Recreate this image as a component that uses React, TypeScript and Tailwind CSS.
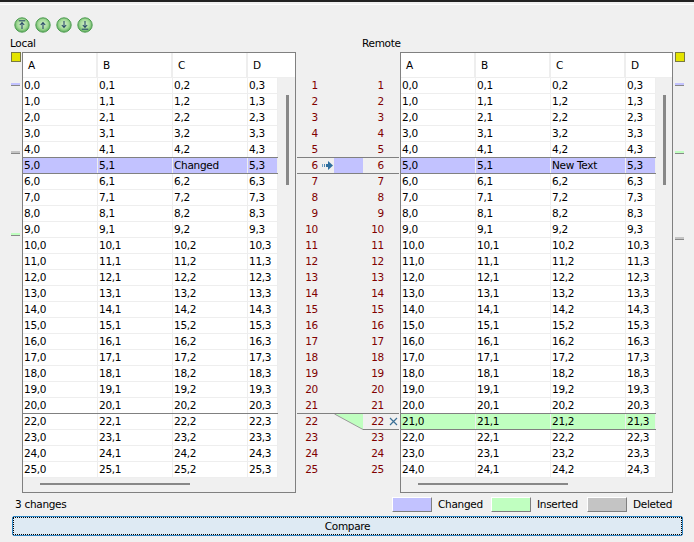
const ROWS_LOCAL = [...Array.from({ length: 21 }, (_, i) => i), 22, 23, 24, 25];
const ROWS_REMOTE = Array.from({ length: 25 }, (_, i) => i);

function RoundIcon({ kind }: { kind: "first" | "up" | "down" | "last" }) {
  const id = "g" + kind;
  const up = kind === "first" || kind === "up";
  return (
    <svg width="16" height="16" viewBox="0 0 16 16" className="block">
      <defs>
        <radialGradient id={id} cx="50%" cy="45%" r="55%">
          <stop offset="0%" stopColor="#d4f0cc" />
          <stop offset="60%" stopColor="#a4da98" />
          <stop offset="100%" stopColor="#58aa58" />
        </radialGradient>
      </defs>
      <circle cx="8" cy="8" r="7.2" fill={`url(#${id})`} stroke="#4f9c52" strokeWidth="1" />
      <g stroke="#2a4a68" strokeWidth="1.1" fill="none">
        {up ? <path d="M8 12V6M5.8 8L8 5.6L10.2 8" /> : <path d="M8 4V10M5.8 8L8 10.4L10.2 8" />}
        {kind === "first" && <path d="M4.8 3.8H11.2" />}
        {kind === "last" && <path d="M4.8 12.2H11.2" />}
      </g>
    </svg>
  );
}

function Ruler({ marks }: { marks: { top: string; color: string }[] }) {
  return (
    <div className="flex w-[10px] flex-col">
      <div className="h-[10px] w-[10px] border border-[#7a7a40] bg-[#e4e400]" />
      {marks.map((m) => (
        <div key={m.top} className={`h-[3px] w-[9px] border-b border-[#888] ${m.top} ${m.color}`} />
      ))}
    </div>
  );
}

function GridRow({
  cells,
  bg,
  dark,
}: {
  cells: string[];
  bg: string;
  dark: boolean;
}) {
  const widths = ["w-[75px]", "w-[75px]", "w-[75px]", "w-[30px]"];
  return (
    <div className={`flex h-[16px] w-[255px] border-b ${bg} ${dark ? "border-[#808080]" : "border-[#eeeeee]"}`}>
      {cells.map((c, i) => (
        <div key={i} className={`${widths[i]} border-r border-[#eeeeee] pl-[1px] leading-[14px] whitespace-nowrap`}>
          {c}
        </div>
      ))}
    </div>
  );
}

function GridBox({
  rows,
  width,
  changedRow,
  insertedRow,
  barOffset,
  hbarOffset,
}: {
  rows: number[];
  width: string;
  changedRow: number;
  insertedRow: number;
  barOffset: string;
  hbarOffset: string;
}) {
  const changedLabel = insertedRow >= 0 ? "New Text" : "Changed";
  return (
    <div className={`h-[441px] ${width} border border-[#808080]`}>
      <div className="flex h-[25px] border-b border-[#eeeeee] bg-white">
        {["A", "B", "C"].map((h) => (
          <div key={h} className="w-[75px] border-r-2 border-[#eeeeee] pl-[5px] leading-[25px]">
            {h}
          </div>
        ))}
        <div className="flex-1 pl-[5px] leading-[25px]">D</div>
      </div>
      <div className="flex">
        <div>
          {rows.map((r, idx) => {
            const isChanged = idx === changedRow;
            const isInserted = idx === insertedRow;
            const dark =
              isChanged ||
              idx === changedRow - 1 ||
              isInserted ||
              (insertedRow >= 0 ? idx === insertedRow - 1 : idx === 20);
            const cells = [0, 1, 2, 3].map((c) => `${r},${c}`);
            if (isChanged) cells[2] = changedLabel;
            return (
              <GridRow
                key={idx}
                cells={cells}
                dark={dark}
                bg={isChanged ? "bg-[#c2c2ff]" : isInserted ? "bg-[#c0ffc0]" : "bg-white"}
              />
            );
          })}
        </div>
        <div className={`mt-[17px] h-[90px] w-[3px] bg-[#888888] ${barOffset}`} />
      </div>
      <div className={`mt-[5px] h-[2px] w-[150px] bg-[#888888] ${hbarOffset}`} />
    </div>
  );
}

function GutterRow({ n }: { n: number }) {
  const isChanged = n === 6;
  const isInserted = n === 22;
  const dark = n === 5 || isChanged || n === 21;
  const line = dark ? "border-[#808080]" : "border-transparent";
  return (
    <div className="relative flex h-[16px] text-[#800000]">
      <div className={`w-[37px] border-b pr-[16px] text-right leading-[14px] ${line}`}>
        {n}
        {isChanged && (
          <svg width="11" height="9" viewBox="0 0 11 9" className="absolute left-[25px] top-[3px]">
            <rect x="0" y="3" width="1" height="3" fill="#6f9fc4" />
            <rect x="2" y="3" width="1" height="3" fill="#4f86b0" />
            <rect x="4" y="3" width="2" height="3" fill="#2f6f9f" />
            <polygon points="6,0 11,4.5 6,9" fill="#2f6f9f" />
          </svg>
        )}
      </div>
      <div className={`w-[29px] border-b ${isChanged ? "bg-[#c2c2ff]" : ""} ${line}`}>
        {isInserted && (
          <svg width="29" height="16" viewBox="0 0 29 16" className="block">
            <polygon points="0.5,0 29,0 29,15.5" fill="#c0ffc0" />
            <path d="M0.5 0L29 15.5" stroke="#999999" fill="none" />
          </svg>
        )}
      </div>
      <div className={`w-[36px] border-b pr-[15px] text-right leading-[14px] ${isInserted ? "border-[#808080]" : line}`}>
        {n}
        {isInserted && (
          <svg width="9" height="9" viewBox="0 0 9 9" className="absolute right-[1px] top-[3px]">
            <path d="M1 1L8 8M8 1L1 8" stroke="#3a6f96" strokeWidth="1.2" fill="none" />
          </svg>
        )}
      </div>
    </div>
  );
}

function Gutter() {
  return (
    <div className="w-[104px] px-[1px] pt-[26px]">
      <div className="relative">
        {ROWS_REMOTE.map((i) => (
          <GutterRow key={i} n={i + 1} />
        ))}
      </div>
    </div>
  );
}

function LegendBox({ color, label, width }: { color: string; label: string; width: string }) {
  return (
    <div className={`flex items-center ${width}`}>
      <div className={`h-[15px] w-[40px] border-t border-l border-t-white border-l-white border-r border-b border-r-[#808080] border-b-[#808080] ${color}`} />
      <span className="ml-[6px] pt-[2px]">{label}</span>
    </div>
  );
}

export default function App() {
  return (
    <div
      className="flex h-[542px] w-[694px] flex-col overflow-hidden bg-[#f0f0f0] text-[10.5px] tracking-[-0.3px] text-black"
      style={{ fontFamily: '"DejaVu Sans", sans-serif' }}
    >
      <div className="h-[2px] bg-[#222222]" />
      <div className="mt-[2px] h-[1px] bg-white" />

      {/* Toolbar */}
      <div className="mt-[12px] flex h-[16px] gap-[5px] pl-[14px]">
        <RoundIcon kind="first" />
        <RoundIcon kind="up" />
        <RoundIcon kind="down" />
        <RoundIcon kind="last" />
      </div>

      <div className="mt-[3px] flex h-[16px] items-center">
        <span className="ml-[10px] w-[352px]">Local</span>
        <span>Remote</span>
      </div>

      {/* Compare panes */}
      <div className="flex pl-[11px]">
        <div className="w-[11px]">
          <Ruler
            marks={[
              { top: "mt-[21px]", color: "bg-[#c2c2ff]" },
              { top: "mt-[65px]", color: "bg-[#c4c4c4]" },
              { top: "mt-[79px]", color: "bg-[#c0ffc0]" },
            ]}
          />
        </div>
        <GridBox
          rows={ROWS_LOCAL}
          width="w-[274px]"
          changedRow={5}
          insertedRow={-1}
          barOffset="ml-[8px]"
          hbarOffset="ml-[17px]"
        />
        <Gutter />
        <GridBox
          rows={ROWS_REMOTE}
          width="w-[273px]"
          changedRow={5}
          insertedRow={21}
          barOffset="ml-[7px]"
          hbarOffset="ml-[17px]"
        />
        <div className="ml-[2px]">
          <Ruler
            marks={[
              { top: "mt-[21px]", color: "bg-[#c2c2ff]" },
              { top: "mt-[65px]", color: "bg-[#c0ffc0]" },
              { top: "mt-[83px]", color: "bg-[#c4c4c4]" },
            ]}
          />
        </div>
      </div>

      {/* Status and legend */}
      <div className="mt-[3px] flex h-[16px] items-center">
        <span className="ml-[15px] w-[377px] pt-[2px]">3 changes</span>
        <LegendBox color="bg-[#c2c2ff]" label="Changed" width="w-[99px]" />
        <LegendBox color="bg-[#c0ffc0]" label="Inserted" width="w-[96px]" />
        <LegendBox color="bg-[#c4c4c4]" label="Deleted" width="w-[90px]" />
      </div>

      <button className="mx-[12px] mt-[4px] h-[20px] w-[671px] rounded-[2px] border border-[#2f86c4] bg-[#deeaf3] p-0 leading-none">
        <div className="flex h-[18px] items-center justify-center border border-dotted border-black">Compare</div>
      </button>
    </div>
  );
}
